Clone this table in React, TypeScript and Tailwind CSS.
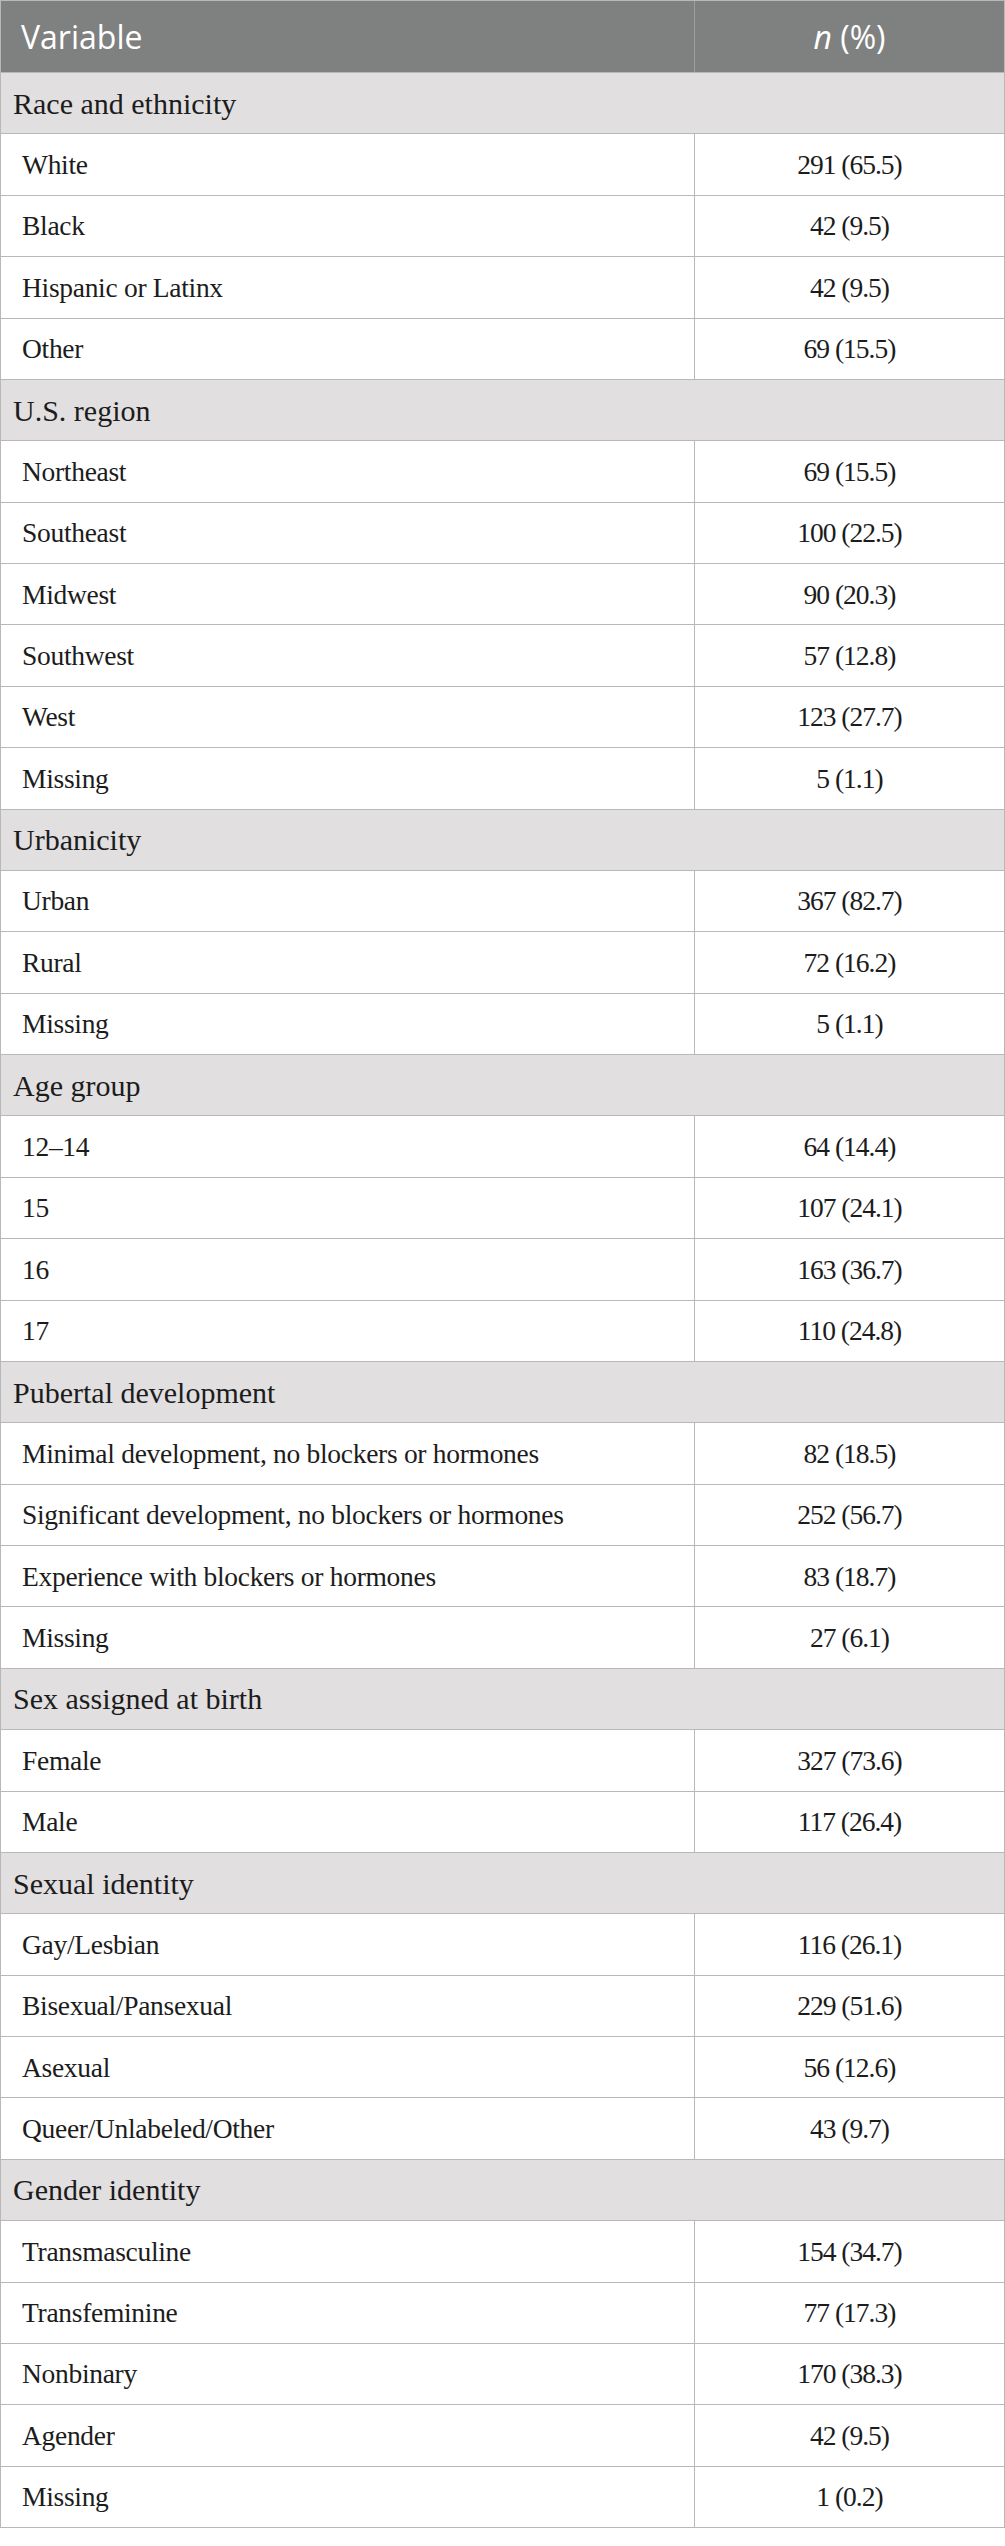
import React from "react";

type Section = { title: string; rows: [string, string][] };

const data: Section[] = [
  {
    title: "Race and ethnicity",
    rows: [
      ["White", "291 (65.5)"],
      ["Black", "42 (9.5)"],
      ["Hispanic or Latinx", "42 (9.5)"],
      ["Other", "69 (15.5)"],
    ],
  },
  {
    title: "U.S. region",
    rows: [
      ["Northeast", "69 (15.5)"],
      ["Southeast", "100 (22.5)"],
      ["Midwest", "90 (20.3)"],
      ["Southwest", "57 (12.8)"],
      ["West", "123 (27.7)"],
      ["Missing", "5 (1.1)"],
    ],
  },
  {
    title: "Urbanicity",
    rows: [
      ["Urban", "367 (82.7)"],
      ["Rural", "72 (16.2)"],
      ["Missing", "5 (1.1)"],
    ],
  },
  {
    title: "Age group",
    rows: [
      ["12–14", "64 (14.4)"],
      ["15", "107 (24.1)"],
      ["16", "163 (36.7)"],
      ["17", "110 (24.8)"],
    ],
  },
  {
    title: "Pubertal development",
    rows: [
      ["Minimal development, no blockers or hormones", "82 (18.5)"],
      ["Significant development, no blockers or hormones", "252 (56.7)"],
      ["Experience with blockers or hormones", "83 (18.7)"],
      ["Missing", "27 (6.1)"],
    ],
  },
  {
    title: "Sex assigned at birth",
    rows: [
      ["Female", "327 (73.6)"],
      ["Male", "117 (26.4)"],
    ],
  },
  {
    title: "Sexual identity",
    rows: [
      ["Gay/Lesbian", "116 (26.1)"],
      ["Bisexual/Pansexual", "229 (51.6)"],
      ["Asexual", "56 (12.6)"],
      ["Queer/Unlabeled/Other", "43 (9.7)"],
    ],
  },
  {
    title: "Gender identity",
    rows: [
      ["Transmasculine", "154 (34.7)"],
      ["Transfeminine", "77 (17.3)"],
      ["Nonbinary", "170 (38.3)"],
      ["Agender", "42 (9.5)"],
      ["Missing", "1 (0.2)"],
    ],
  },
];

export default function App() {
  return (
    <div className="w-[1005px] bg-white">
      <div className="border-l border-r border-t border-[#b8b8b8] text-[#1c1c1c]">
        <div className="flex h-[72px] bg-[#7f8180] border-b border-[#b8b8b8] text-white font-['Open_Sans'] text-[32px]">
          <div className="w-[694px] flex items-center pl-[20px] border-r border-[#9c9e9d]">Variable</div>
          <div className="flex-1 flex items-center justify-center">
            <span className="italic">n</span>
            <span>&nbsp;(%)</span>
          </div>
        </div>
        {data.map((s) => (
          <React.Fragment key={s.title}>
            <div className="flex items-center h-[61.375px] bg-[#e1dfe0] border-b border-[#b8b8b8] pl-[12px] font-['Liberation_Serif'] text-[30px]">
              {s.title}
            </div>
            {s.rows.map(([label, val], i) => (
              <div
                key={s.title + i}
                className="flex h-[61.375px] border-b border-[#b8b8b8] font-['Liberation_Serif'] text-[27.5px]"
              >
                <div className="w-[694px] flex items-center pl-[21px] border-r border-[#b8b8b8] tracking-[-0.3px]">
                  {label}
                </div>
                <div className="flex-1 flex items-center justify-center tracking-[-1px]">{val}</div>
              </div>
            ))}
          </React.Fragment>
        ))}
      </div>
      <div className="h-[19px]" />
    </div>
  );
}
